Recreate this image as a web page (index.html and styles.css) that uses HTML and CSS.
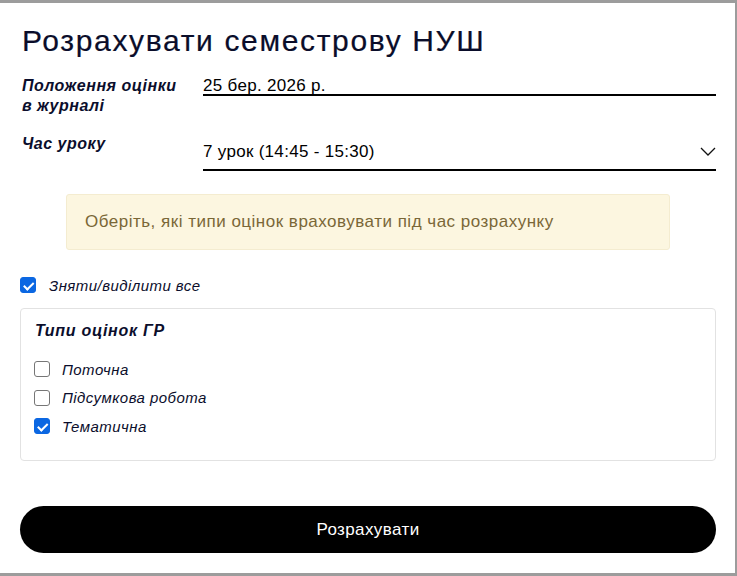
FILE: index.html
```html
<!DOCTYPE html>
<html lang="uk">
<head>
<meta charset="utf-8">
<link rel="stylesheet" href="styles.css">
</head>
<body>
<div class="modal">
  <h1 class="title">Розрахувати семестрову НУШ</h1>
  <div class="field">
    <div class="label">Положення оцінки<br>в журналі</div>
    <div class="control date">25 бер. 2026 р.</div>
  </div>
  <div class="field">
    <div class="label">Час уроку</div>
    <div class="control select">
      <span>7 урок (14:45 - 15:30)</span>
      <svg class="chev" width="16" height="9" viewBox="0 0 16 9"><path d="M1 1 L8 8 L15 1" fill="none" stroke="#111" stroke-width="1.3"/></svg>
    </div>
  </div>
  <div class="alert">Оберіть, які типи оцінок враховувати під час розрахунку</div>
  <label class="check all"><span class="box on"></span><span class="ctext">Зняти/виділити все</span></label>
  <div class="group">
    <div class="gtitle">Типи оцінок ГР</div>
    <div class="list">
      <label class="check"><span class="box"></span><span class="ctext">Поточна</span></label>
      <label class="check"><span class="box"></span><span class="ctext">Підсумкова робота</span></label>
      <label class="check"><span class="box on"></span><span class="ctext">Тематична</span></label>
    </div>
  </div>
  <button class="btn">Розрахувати</button>
</div>
</body>
</html>
```
FILE: styles.css
```css
html, body { margin: 0; padding: 0; }
body {
  background: #9c9c9c;
  width: 737px;
  height: 576px;
  overflow: hidden;
  font-family: "Liberation Sans", Arial, sans-serif;
  color: #0d1030;
}
.modal {
  margin-top: 3px;
  width: 735px;
  height: 570px;
  background: #fff;
  box-sizing: border-box;
  padding: 21px 19px 0 20px;
  display: flex;
  flex-direction: column;
}
.title {
  margin: 0 0 0 2px;
  font-size: 30px;
  letter-spacing: 1.65px;
  font-weight: 400;
  line-height: 34px;
  color: #0a0d2a;
  -webkit-text-stroke: 0.2px #0a0d2a;
}
.field {
  display: flex;
  margin-top: 18px;
}
.label {
  width: 165px;
  margin-left: 2px;
  flex: none;
  font-weight: 700;
  font-style: italic;
  font-size: 16px;
  letter-spacing: 0.5px;
  line-height: 20px;
  padding-right: 16px;
  color: #0b0e2c;
}
.control {
  flex: 1;
  border-bottom: 2px solid #000;
  font-size: 17px;
  letter-spacing: 0.3px;
  color: #000;
}
.date {
  height: 18px;
  line-height: 20px;
  align-self: flex-start;
}
.select {
  box-sizing: border-box;
  height: 37px;
  padding-top: 8px;
  line-height: 20px;
  display: flex;
  justify-content: space-between;
  align-items: flex-start;
}
.chev { margin-top: 5px; margin-right: 0; }
.alert {
  margin: 23px 46px 0 46px;
  background: #fcf6e0;
  border: 1px solid #f4ecd0;
  border-radius: 3px;
  height: 56px;
  box-sizing: border-box;
  padding-left: 18px;
  display: flex;
  align-items: center;
  font-size: 17px;
  letter-spacing: 0.5px;
  color: #7a6737;
}
.check {
  display: flex;
  align-items: center;
  font-style: italic;
  font-size: 15px;
  letter-spacing: 0.45px;
  color: #0b0e2c;
  height: 20px;
}
.box {
  width: 16px;
  height: 16px;
  box-sizing: border-box;
  border: 1px solid #767676;
  border-radius: 3px;
  background: #fff;
  flex: none;
  position: relative;
}
.box.on {
  background: #0b67e2;
  border-color: #0b67e2;
}
.box.on::after {
  content: "";
  position: absolute;
  left: 4.5px;
  top: 1.5px;
  width: 3.5px;
  height: 7.5px;
  border: solid #fff;
  border-width: 0 2px 2px 0;
  transform: rotate(45deg);
}
.ctext { margin-left: 12px; }
.all { margin: 25px 0 0 0; }
.all .ctext { margin-left: 13px; }
.group {
  margin-top: 13px;
  border: 1px solid #e2e2e2;
  border-radius: 4px;
  height: 153px;
  box-sizing: border-box;
  padding: 12px 13px 0 13px;
}
.gtitle {
  font-weight: 700;
  font-style: italic;
  font-size: 16px;
  letter-spacing: 0.7px;
  line-height: 20px;
  margin-left: 1px;
  color: #0b0e2c;
}
.list {
  margin-top: 18px;
  display: flex;
  flex-direction: column;
  gap: 8.5px;
}
.btn {
  margin-top: 45px;
  height: 47px;
  border: none;
  border-radius: 24px;
  background: #000;
  color: #fff;
  font-family: "Liberation Sans", Arial, sans-serif;
  font-size: 17px;
  letter-spacing: 0.4px;
}
```
